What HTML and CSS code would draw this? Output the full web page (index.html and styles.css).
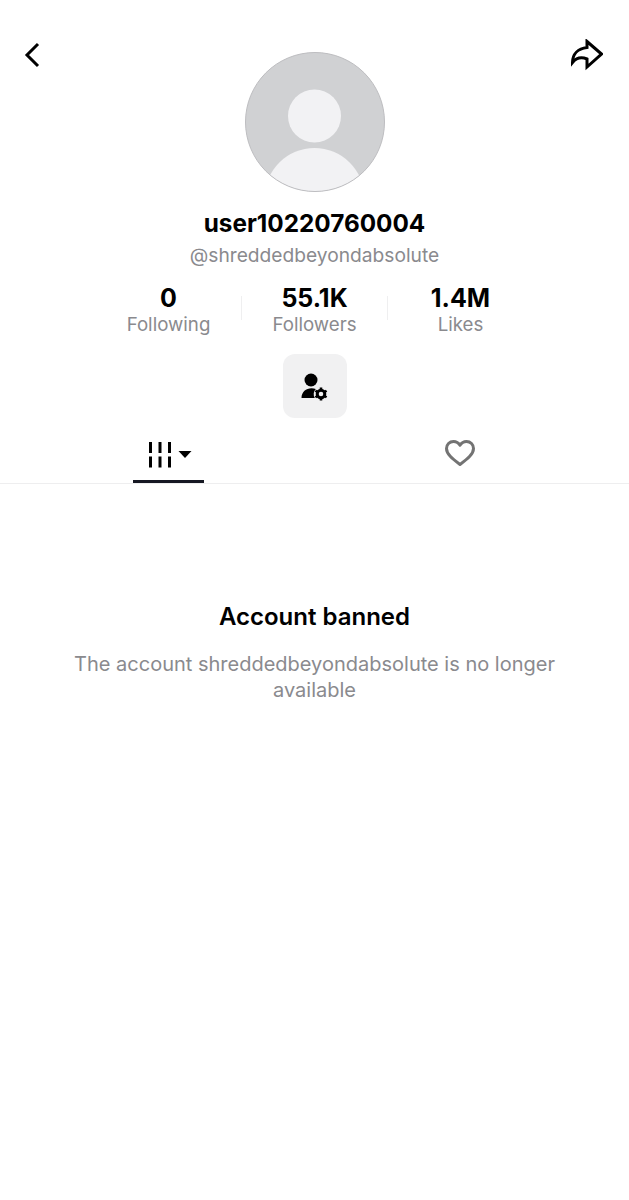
FILE: index.html
```html
<!DOCTYPE html>
<html lang="en">
<head>
<meta charset="UTF-8" />
<title>user10220760004</title>
<link rel="stylesheet" href="styles.css">
</head>
<body>
  <div class="top">
    <button class="icon-btn back" aria-label="Back">
      <svg width="16" height="26" viewBox="0 0 16 26"><path d="M14 2 3 13l11 11" fill="none" stroke="#000" stroke-width="3"/></svg>
    </button>
    <svg class="avatar" width="140" height="140" viewBox="0 0 140 140">
      <defs><clipPath id="round"><circle cx="70" cy="70" r="69.5"/></clipPath></defs>
      <circle cx="70" cy="70" r="69.5" fill="#d0d1d3"/>
      <g clip-path="url(#round)">
        <circle cx="69.5" cy="64" r="26.5" fill="#f2f2f4"/>
        <ellipse cx="69.5" cy="146" rx="50" ry="50" fill="#f2f2f4"/>
      </g>
      <circle cx="70" cy="70" r="69.5" fill="none" stroke="#bdbdc0" stroke-width="1"/>
    </svg>
    <button class="icon-btn share" aria-label="Share">
      <svg width="34" height="32" viewBox="0 0 34 32"><path d="M18 2.500 32.500 15 18 28V20C13 18 8 18 3.500 23.500 3.500 15 9 9.500 18 8.500Z" fill="none" stroke="#000" stroke-width="3" stroke-linejoin="miter"/></svg>
    </button>
  </div>

  <h1 class="name">user10220760004</h1>
  <div class="handle">@shreddedbeyondabsolute</div>

  <div class="stats">
    <div class="stat"><b>0</b><span>Following</span></div>
    <div class="stat"><b>55.1K</b><span>Followers</span></div>
    <div class="stat"><b>1.4M</b><span>Likes</span></div>
  </div>

  <div class="actions">
    <button class="manage" aria-label="Account settings">
      <svg width="30" height="30" viewBox="0 0 30 30">
        <circle cx="11" cy="9" r="6.500"/>
        <path d="M1.500 27C1.500 21 6 17.300 11.500 17.300c1.500 0 3 .2 4.300.7-2.300 2.400-2.800 6-1 9Z"/>
        <path d="M21 16.500v13M15.400 19.750l11.200 6.500M15.400 26.250l11.200-6.500" stroke="#000" stroke-width="2.600"/>
        <circle cx="21" cy="23" r="3.800" fill="#f1f1f2" stroke="#000" stroke-width="3"/>
      </svg>
    </button>
  </div>

  <div class="tabs">
    <div class="tab active">
      <svg width="44" height="26" viewBox="0 0 44 26">
        <path d="M2.500 0v11M12 0v11M21.500 0v11M2.500 14.500v11M12 14.500v11M21.500 14.500v11" stroke="#000" stroke-width="3"/>
        <path d="M30.500 9h13l-6.500 7Z"/>
      </svg>
    </div>
    <div class="tab fav">
      <svg width="32" height="28" viewBox="0 0 32 28"><path d="M16 25.500C8 19.500 2.500 15 2.500 9.500 2.500 5.500 5.500 2.500 9.500 2.500c2.700 0 5 1.300 6.500 3.800 1.500-2.500 3.800-3.800 6.500-3.800 4 0 7 3 7 7 0 5.500-5.500 10-13.500 16Z" fill="none" stroke="#737373" stroke-width="3" stroke-linejoin="round"/></svg>
    </div>
  </div>

  <div class="banned">
    <h2>Account banned</h2>
    <p>The account shreddedbeyondabsolute is no longer available</p>
  </div>
</body>
</html>
```

FILE: styles.css
```css
* {
  box-sizing: border-box;
}
html, body {
  height: 100%;
}
body {
  margin: 0;
  background: #fff;
  color: #000;
  font-family: Inter, "Liberation Sans", sans-serif;
}
button {
  padding: 0;
  border: none;
  background: none;
}
h1, h2, p {
  margin: 0;
}

.top {
  display: grid;
  grid-template-columns: 1fr 140px 1fr;
  padding: 39px 26px 0 24px;
  height: 192px;
  align-items: start;
}
.icon-btn {
  display: flex;
}
.back {
  justify-self: start;
  padding-top: 3px;
}
.share {
  justify-self: end;
}
.avatar {
  display: block;
  margin-top: 13px;
  margin-left: 1px;
}

.name {
  margin-top: 16px;
  font-size: 24.300px;
  line-height: 30px;
  font-weight: 700;
  text-align: center;
}
.handle {
  margin-top: 5px;
  font-size: 19.200px;
  line-height: 24px;
  color: #8a8a8e;
  text-align: center;
}

.stats {
  display: grid;
  grid-template-columns: repeat(3, 146px);
  justify-content: center;
  margin-top: 18px;
}
.stat {
  display: flex;
  flex-direction: column;
  align-items: center;
  position: relative;
}
.stat + .stat::before {
  content: "";
  position: absolute;
  left: -1px;
  top: 11px;
  height: 24px;
  width: 1px;
  background: #efeff0;
}
.stat b {
  font-size: 25px;
  line-height: 26px;
  margin-bottom: 2px;
  font-weight: 700;
}
.stat span {
  font-size: 18.700px;
  line-height: 24px;
  color: #8a8a8e;
}

.actions {
  display: flex;
  justify-content: center;
  margin-top: 17px;
}
.manage {
  display: flex;
  align-items: center;
  justify-content: center;
  width: 64px;
  height: 64px;
  border-radius: 12px;
  background: #f1f1f2;
}

.tabs {
  display: grid;
  grid-template-columns: 292px 292px;
  justify-content: center;
  height: 66px;
  border-bottom: 1px solid #eeeeef;
}
.tab {
  display: flex;
  justify-content: center;
  padding-top: 24px;
  position: relative;
  left: -1px;
}
.tab.fav {
  padding-top: 21px;
}
.tab.active svg {
  margin-left: 4px;
}
.tab.active::after {
  content: "";
  position: absolute;
  left: 111px;
  bottom: 0;
  width: 71px;
  height: 3px;
  background: #161823;
}

.banned {
  padding: 118px 60px 0;
  text-align: center;
}
.banned h2 {
  font-size: 24px;
  line-height: 30px;
  font-weight: 600;
}
.banned p {
  margin-top: 19px;
  font-size: 20px;
  line-height: 26px;
  color: #8a8a8e;
}
```
